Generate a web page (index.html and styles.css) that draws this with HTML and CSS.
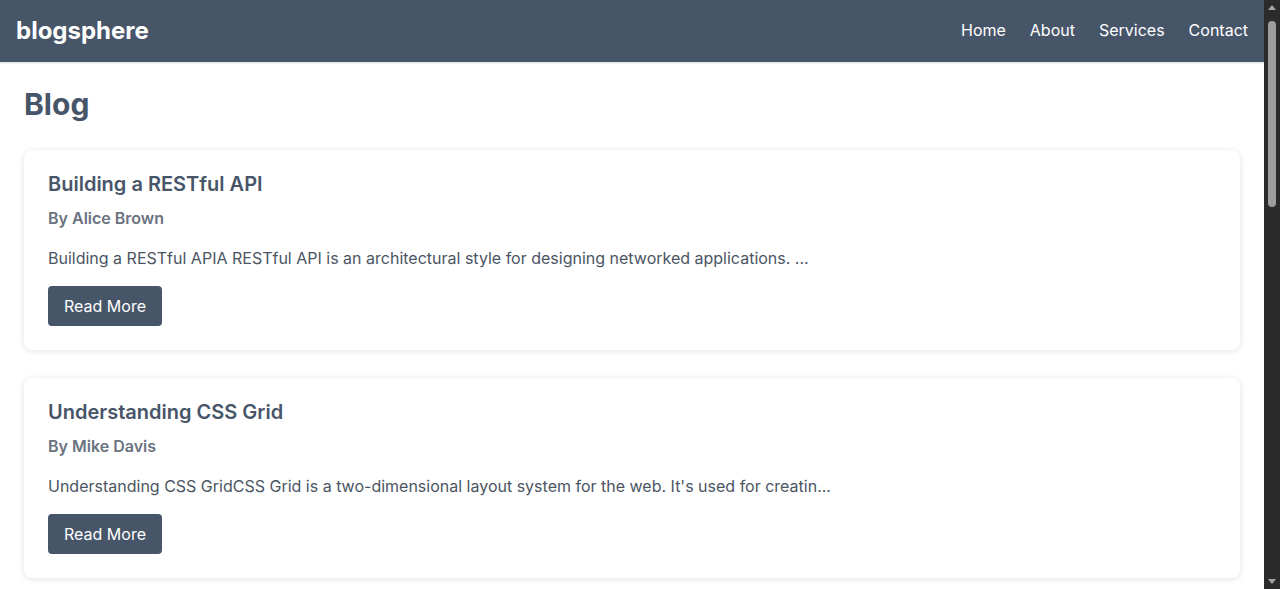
FILE: index.html
```html
<!DOCTYPE html>
<html lang="en">
<head>
<meta charset="utf-8">
<title>blogsphere</title>
<link rel="stylesheet" href="styles.css">
</head>
<body>
<div class="page">
  <header class="site-header">
    <div class="logo">blogsphere</div>
    <nav class="nav">
      <a href="#">Home</a>
      <a href="#">About</a>
      <a href="#">Services</a>
      <a href="#">Contact</a>
    </nav>
  </header>
  <main class="main">
    <h1 class="page-title">Blog</h1>
    <article class="card">
      <h2 class="card-title">Building a RESTful API</h2>
      <p class="card-author">By Alice Brown</p>
      <p class="card-excerpt">Building a RESTful APIA RESTful API is an architectural style for designing networked applications. ...</p>
      <button class="btn">Read More</button>
    </article>
    <article class="card">
      <h2 class="card-title">Understanding CSS Grid</h2>
      <p class="card-author">By Mike Davis</p>
      <p class="card-excerpt">Understanding CSS GridCSS Grid is a two-dimensional layout system for the web. It's used for creatin...</p>
      <button class="btn">Read More</button>
    </article>
  </main>
</div>
<div class="scrollbar" aria-hidden="true">
  <span class="scroll-arrow up"></span>
  <span class="scroll-track"><span class="scroll-thumb"></span></span>
  <span class="scroll-arrow down"></span>
</div>
</body>
</html>
```
FILE: styles.css
```css
* {
  box-sizing: border-box;
}
html,
body {
  overflow: hidden;
}
body {
  margin: 0;
  background: #ffffff;
  font-family: Inter, "Noto Sans", sans-serif;
  color: #4b5563;
}
.page {
  margin-right: 16px;
}
.site-header {
  display: flex;
  align-items: center;
  justify-content: space-between;
  height: 62px;
  padding: 0 16px;
  background: #475569;
  box-shadow: 0 1px 2px rgba(0, 0, 0, 0.15);
}
.logo {
  color: #ffffff;
  font-size: 24px;
  font-weight: 700;
  line-height: 30px;
}
.nav {
  display: flex;
  gap: 24px;
  padding-bottom: 3px;
}
.nav a {
  color: #ffffff;
  text-decoration: none;
  font-size: 16px;
  line-height: 24px;
}
.main {
  padding: 24px;
}
.page-title {
  margin: 0 0 28px;
  font-size: 30px;
  line-height: 36px;
  font-weight: 700;
  color: #475569;
}
.card {
  background: #ffffff;
  border-radius: 8px;
  box-shadow: 0 1px 6px rgba(0, 0, 0, 0.12);
  padding: 20px 24px 24px;
  margin-bottom: 28px;
}
.card-title {
  margin: 0 0 8px;
  font-size: 20px;
  line-height: 28px;
  font-weight: 600;
  color: #475569;
}
.card-author {
  margin: 0 0 16px;
  font-size: 16px;
  line-height: 24px;
  font-weight: 600;
  color: #6b7280;
}
.card-excerpt {
  margin: 0 0 16px;
  font-size: 16px;
  line-height: 24px;
  color: #4b5563;
}
.btn {
  display: inline-block;
  background: #475569;
  color: #ffffff;
  border: none;
  border-radius: 4px;
  padding: 8px 16px;
  font-family: inherit;
  font-size: 16px;
  line-height: 24px;
  cursor: pointer;
}
.scrollbar {
  position: fixed;
  top: 0;
  right: 0;
  bottom: 0;
  width: 16px;
  background: #2b2b2b;
  display: flex;
  flex-direction: column;
  align-items: center;
}
.scroll-arrow {
  width: 0;
  height: 0;
  border-left: 4px solid transparent;
  border-right: 4px solid transparent;
  margin: 5px 0;
}
.scroll-arrow.up {
  border-bottom: 5px solid #a3a3a3;
}
.scroll-arrow.down {
  border-top: 5px solid #a3a3a3;
}
.scroll-track {
  flex: 1;
  width: 100%;
  display: flex;
  justify-content: center;
  padding-top: 6px;
}
.scroll-thumb {
  width: 8px;
  height: 186px;
  border-radius: 4px;
  background: #9e9e9e;
}
```
